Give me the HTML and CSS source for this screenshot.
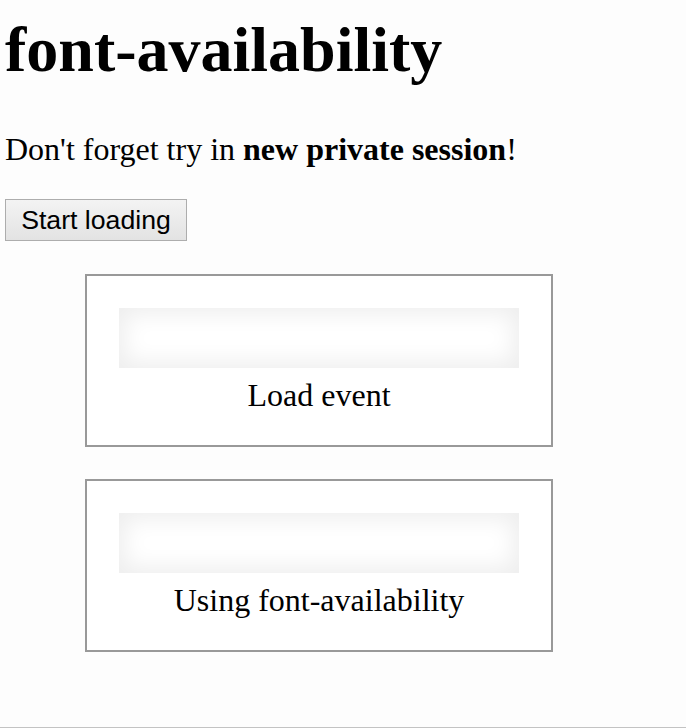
FILE: index.html
```html
<!DOCTYPE html>
<html lang="en">
<head>
<meta charset="utf-8">
<title>font-availability</title>
<link rel="stylesheet" href="styles.css">
</head>
<body>
<h1 class="title">font-availability</h1>
<p class="note">Don't forget try in <strong>new private session</strong>!</p>
<button class="start" type="button">Start loading</button>
<div class="demo">
  <div class="sample"></div>
  <div class="caption">Load event</div>
</div>
<div class="demo">
  <div class="sample"></div>
  <div class="caption">Using font-availability</div>
</div>
</body>
</html>
```
FILE: styles.css
```css
html {
  min-height: 100vh;
  box-sizing: border-box;
  border-bottom: 1px solid #c3c3c3;
  background: #fdfdfd;
}
body {
  margin: 0;
  padding: 0 5px;
  font-family: "Liberation Serif", "Times New Roman", serif;
  color: #000;
  line-height: 1.15;
}
.title {
  font-size: 64px;
  font-weight: bold;
  margin: 13px 0 44px;
  line-height: 1.15;
}
.note {
  font-size: 32px;
  margin: 0 0 32px;
}
.start {
  display: block;
  font-family: "Liberation Sans", Arial, sans-serif;
  font-size: 26.67px;
  width: 182px;
  height: 42px;
  padding: 0;
  color: #000;
  border: 1px solid #adadad;
  background: linear-gradient(#f3f3f3, #e3e3e3);
  margin: 0 0 33px;
}
.demo {
  width: 400px;
  margin: 0 0 32px 80px;
  padding: 32px 32px 31px;
  border: 2px solid #999;
  background: #fff;
}
.sample {
  height: 60px;
  background: #fff;
  box-shadow: inset 0 0 22px 6px rgba(0, 0, 0, 0.07);
}
.caption {
  margin-top: 9px;
  text-align: center;
  font-size: 32px;
}
```
